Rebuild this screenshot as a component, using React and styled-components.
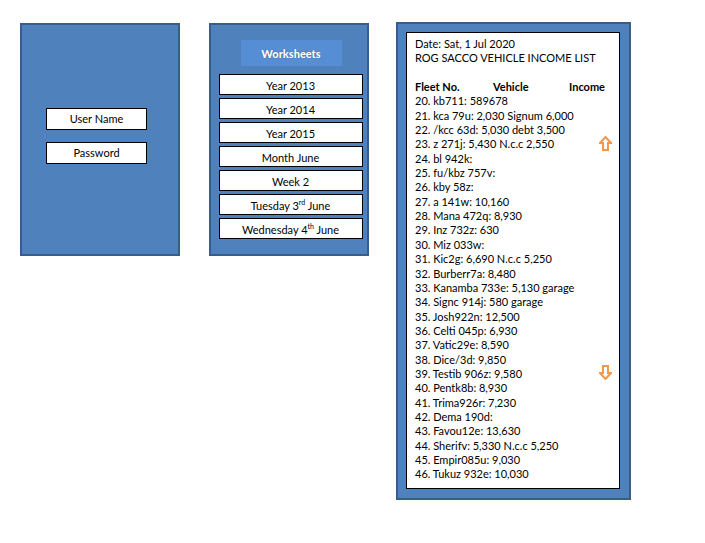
import styled, { createGlobalStyle } from 'styled-components';

const GlobalStyle = createGlobalStyle`
  body {
    margin: 0;
    background: #ffffff;
    font-family: Lato, "Open Sans", sans-serif;
  }
`;

const worksheets = [
  { label: 'Year 2013' },
  { label: 'Year 2014' },
  { label: 'Year 2015' },
  { label: 'Month June' },
  { label: 'Week 2' },
  { label: 'Tuesday 3', sup: 'rd', after: ' June' },
  { label: 'Wednesday 4', sup: 'th', after: ' June' },
];

const vehicles = [
  '20. kb711: 589678',
  '21. kca 79u: 2,030 Signum 6,000',
  '22. /kcc 63d: 5,030 debt 3,500',
  '23. z 271j: 5,430 N.c.c 2,550',
  '24. bl 942k:',
  '25. fu/kbz 757v:',
  '26. kby 58z:',
  '27. a 141w: 10,160',
  '28. Mana 472q: 8,930',
  '29. Inz 732z: 630',
  '30. Miz 033w:',
  '31. Kic2g: 6,690 N.c.c 5,250',
  '32. Burberr7a: 8,480',
  '33. Kanamba 733e: 5,130 garage',
  '34. Signc 914j: 580 garage',
  '35. Josh922n: 12,500',
  '36. Celti 045p: 6,930',
  '37. Vatic29e: 8,590',
  '38. Dice/3d: 9,850',
  '39. Testib 906z: 9,580',
  '40. Pentk8b: 8,930',
  '41. Trima926r: 7,230',
  '42. Dema 190d:',
  '43. Favou12e: 13,630',
  '44. Sherifv: 5,330 N.c.c 5,250',
  '45. Empir085u: 9,030',
  '46. Tukuz 932e: 10,030',
];

function Arrow({ down }) {
  return (
    <svg width="13" height="15" viewBox="0 0 13 15">
      <path
        d={
          down
            ? 'M4 1 H9 V8 H12 L6.5 14 L1 8 H4 Z'
            : 'M4 14 H9 V7 H12 L6.5 1 L1 7 H4 Z'
        }
        fill="#fff"
        stroke="#f79646"
        strokeWidth="2"
        strokeLinejoin="miter"
      />
    </svg>
  );
}

function App() {
  return (
    <>
      <GlobalStyle />
      <Page>
        <LoginPanel>
          <Field>User Name</Field>
          <Field>Password</Field>
        </LoginPanel>

        <SheetPanel>
          <SheetTitle>Worksheets</SheetTitle>
          <SheetList>
            {worksheets.map((w) => (
              <SheetButton key={w.label}>
                {w.label}
                {w.sup && <sup>{w.sup}</sup>}
                {w.after}
              </SheetButton>
            ))}
          </SheetList>
        </SheetPanel>

        <ListPanel>
          <ListBox>
            <Line>Date: Sat, 1 Jul 2020</Line>
            <Line>ROG SACCO VEHICLE INCOME LIST</Line>
            <Line>&nbsp;</Line>
            <HeaderRow>
              <span>Fleet No.</span>
              <span>Vehicle</span>
              <span>Income</span>
            </HeaderRow>
            {vehicles.map((v) => (
              <Line key={v}>{v}</Line>
            ))}
            <ArrowSpot $top={103}>
              <Arrow />
            </ArrowSpot>
            <ArrowSpot $top={332}>
              <Arrow down />
            </ArrowSpot>
          </ListBox>
        </ListPanel>
      </Page>
    </>
  );
}

export default App;

const Page = styled.div`
  display: flex;
  align-items: flex-start;
  padding: 23px 0 0 20px;
`;

const Panel = styled.div`
  box-sizing: border-box;
  background: #4f81bd;
  border: 2px solid #385d8a;
`;

const LoginPanel = styled(Panel)`
  width: 160px;
  height: 233px;
  display: flex;
  flex-direction: column;
  align-items: center;
  padding: 83px 7px 0 0;
  gap: 12px;
`;

const Field = styled.div`
  box-sizing: border-box;
  width: 101px;
  height: 22px;
  background: #fff;
  border: 1px solid #000;
  font-size: 11px;
  line-height: 20px;
  text-align: center;
  color: #000;
`;

const SheetPanel = styled(Panel)`
  width: 160px;
  height: 233px;
  margin-left: 29px;
  display: flex;
  flex-direction: column;
  align-items: center;
  padding-top: 15px;
`;

const SheetTitle = styled.div`
  width: 101px;
  height: 26px;
  margin-left: 4px;
  background: #558ed5;
  color: #fff;
  font-weight: 900;
  font-size: 11px;
  line-height: 27px;
  text-align: center;
  text-shadow: 0 0 1px #2a4a75;
`;

const SheetList = styled.div`
  display: flex;
  flex-direction: column;
  gap: 3px;
  margin-top: 8px;
  margin-left: 3px;
`;

const SheetButton = styled.div`
  box-sizing: border-box;
  width: 144px;
  height: 21px;
  background: #fff;
  border: 1px solid #000;
  font-size: 11px;
  line-height: 21px;
  text-align: center;
  color: #000;

  sup {
    font-size: 7px;
    line-height: 0;
  }
`;

const ListPanel = styled(Panel)`
  width: 235px;
  height: 478px;
  margin-left: 27px;
  margin-top: -1px;
  padding: 8px 9px 9px 8px;
`;

const ListBox = styled.div`
  position: relative;
  box-sizing: border-box;
  height: 100%;
  background: #fff;
  border: 1px solid #000;
  padding: 4px 8px 0 8px;
  font-size: 11px;
  color: #000;
`;

const Line = styled.div`
  height: 14.35px;
  line-height: 14.35px;
  white-space: nowrap;
`;

const HeaderRow = styled(Line)`
  display: grid;
  grid-template-columns: 78px 76px auto;
  font-weight: bold;
`;

const ArrowSpot = styled.div`
  position: absolute;
  right: 7px;
  top: ${(p) => p.$top}px;
  line-height: 0;
`;
